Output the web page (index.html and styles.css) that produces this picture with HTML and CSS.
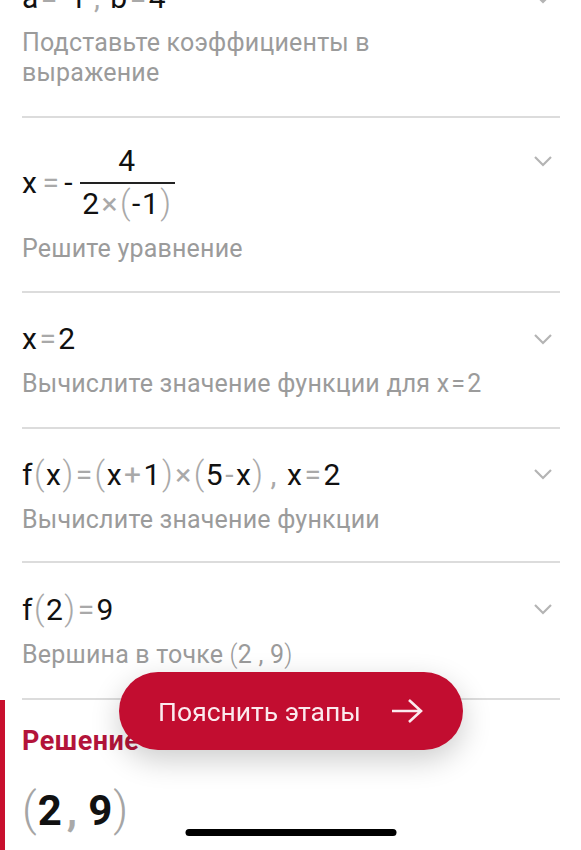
FILE: index.html
```html
<!DOCTYPE html>
<html lang="ru">
<head>
    <meta charset="UTF-8">
    <meta name="viewport" content="width=device-width, initial-scale=1.0">
    <title>Решение</title>
    <link rel="stylesheet" href="styles.css">
</head>
<body>
    <div class="steps">
        <div class="step">
            <div class="step-body">
                <div class="math">a<span class="op">=</span>-1<span class="op sep">,</span>b<span class="op">=</span>4</div>
                <div class="hint">Подставьте коэффициенты в<br>выражение</div>
            </div>
            <svg class="chevron" viewBox="0 0 20 12"><path d="M2 2 L10 10 L18 2"/></svg>
        </div>

        <div class="step step-frac">
            <div class="step-body">
                <div class="math math-frac">x<span class="op">=</span>-<span class="frac"><span class="num">4</span><span class="den">2<span class="op">×</span><span class="op paren">(</span>-1<span class="op paren">)</span></span></span></div>
                <div class="hint">Решите уравнение</div>
            </div>
            <svg class="chevron" viewBox="0 0 20 12"><path d="M2 2 L10 10 L18 2"/></svg>
        </div>

        <div class="step">
            <div class="step-body">
                <div class="math">x<span class="op">=</span>2</div>
                <div class="hint">Вычислите значение функции для x<span class="hint-op">=</span>2</div>
            </div>
            <svg class="chevron" viewBox="0 0 20 12"><path d="M2 2 L10 10 L18 2"/></svg>
        </div>

        <div class="step step-tight">
            <div class="step-body">
                <div class="math">f<span class="op paren">(</span>x<span class="op paren">)</span><span class="op">=</span><span class="op paren">(</span>x<span class="op">+</span>1<span class="op paren">)</span><span class="op">×</span><span class="op paren">(</span>5<span class="op">-</span>x<span class="op paren">)</span><span class="op sep">,</span>x<span class="op">=</span>2</div>
                <div class="hint">Вычислите значение функции</div>
            </div>
            <svg class="chevron" viewBox="0 0 20 12"><path d="M2 2 L10 10 L18 2"/></svg>
        </div>

        <div class="step">
            <div class="step-body">
                <div class="math">f<span class="op paren">(</span>2<span class="op paren">)</span><span class="op">=</span>9</div>
                <div class="hint">Вершина в точке <span class="hint-paren">(</span>2 , 9<span class="hint-paren">)</span></div>
            </div>
            <svg class="chevron" viewBox="0 0 20 12"><path d="M2 2 L10 10 L18 2"/></svg>
        </div>
    </div>

    <div class="solution">
        <div class="solution-title">Решение</div>
        <div class="solution-answer"><span class="op paren">(</span>2<span class="op sep">,</span>9<span class="op paren">)</span></div>
    </div>

    <button class="explain-btn">
        <span>Пояснить этапы</span>
        <svg class="arrow" viewBox="0 0 32 26"><path d="M1 13 H30 M18 2 L30 13 L18 24"/></svg>
    </button>

    <div class="home-bar"></div>
</body>
</html>
```

FILE: styles.css
```css
body {
    margin: 0;
    font-family: Roboto, 'Noto Sans', sans-serif;
    background-color: #fff;
    color: #111;
    overflow: hidden;
    height: 850px;
}

.steps {
    margin-top: -48px;
    padding: 0 21px 0 22px;
}

.step {
    display: flex;
    align-items: flex-start;
    padding: 29px 7px 28px 0;
    border-bottom: 2px solid #dcdcdc;
}

.step-frac {
    padding-top: 26px;
    padding-bottom: 27px;
}

.step-tight {
    padding-top: 28px;
    padding-bottom: 26px;
}

.step-body {
    flex: 1;
}

.math {
    font-size: 30px;
    line-height: 34px;
    letter-spacing: 1.5px;
    white-space: nowrap;
}

.op {
    color: #a9a9a9;
    margin: 0 1px;
}

.paren {
    font-weight: 300;
    font-size: 33px;
    margin: 0;
}

.sep {
    margin: 0 9px 0 6px;
}

.math-frac {
    display: flex;
    align-items: center;
}

.math-frac > .op {
    margin: 0 4px;
}

.frac {
    display: flex;
    flex-direction: column;
    align-items: center;
    margin-left: 6px;
}

.num {
    line-height: 34px;
    padding: 0 8px 4px;
}

.den {
    line-height: 34px;
    border-top: 2px solid #222;
    padding: 2px 2px 0;
}

.hint {
    margin-top: 13px;
    font-size: 25px;
    line-height: 30px;
    letter-spacing: 0.2px;
    color: #9b9b9b;
}

.hint-op {
    margin: 0 2px;
}

.hint-paren {
    font-weight: 300;
}

.chevron {
    width: 20px;
    height: 12px;
    margin-top: 11px;
    fill: none;
    stroke: #b4b4b4;
    stroke-width: 2.2;
}

.solution {
    border-left: 5px solid #c8102e;
    padding: 26px 0 40px 17px;
    height: 200px;
}

.solution-title {
    font-size: 27px;
    line-height: 30px;
    font-weight: 700;
    letter-spacing: 0.5px;
    color: #b3143a;
}

.solution-answer {
    margin-top: 28px;
    font-size: 42px;
    line-height: 50px;
    font-weight: 700;
    letter-spacing: 1px;
}

.solution-answer .paren {
    font-size: 46px;
    font-weight: 300;
    color: #a5a5a5;
}

.solution-answer .sep {
    margin: 0 10px 0 4px;
}

.explain-btn {
    position: fixed;
    left: 50%;
    bottom: 100px;
    transform: translateX(-50%);
    width: 344px;
    height: 78px;
    border: none;
    border-radius: 39px;
    background-color: #c20d30;
    color: #fbeaee;
    font-family: Roboto, 'Noto Sans', sans-serif;
    font-size: 26.5px;
    display: flex;
    align-items: center;
    justify-content: center;
    gap: 30px;
    box-shadow: 0 10px 30px rgba(0, 0, 0, 0.2);
}

.arrow {
    width: 32px;
    height: 26px;
    fill: none;
    stroke: #fbeaee;
    stroke-width: 2.6;
}

.home-bar {
    position: fixed;
    left: 50%;
    bottom: 14px;
    transform: translateX(-50%);
    width: 211px;
    height: 7px;
    border-radius: 4px;
    background-color: #000;
}
```
